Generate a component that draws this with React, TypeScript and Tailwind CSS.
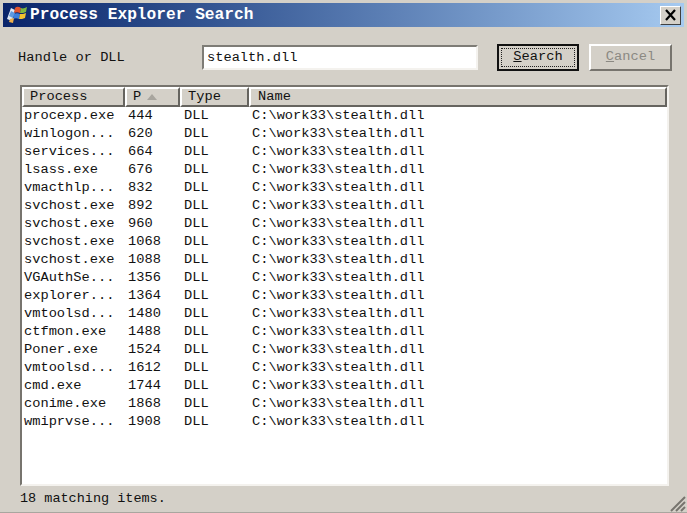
const rows = [
  ["procexp.exe", "444"],
  ["winlogon...", "620"],
  ["services...", "664"],
  ["lsass.exe", "676"],
  ["vmacthlp...", "832"],
  ["svchost.exe", "892"],
  ["svchost.exe", "960"],
  ["svchost.exe", "1068"],
  ["svchost.exe", "1088"],
  ["VGAuthSe...", "1356"],
  ["explorer...", "1364"],
  ["vmtoolsd...", "1480"],
  ["ctfmon.exe", "1488"],
  ["Poner.exe", "1524"],
  ["vmtoolsd...", "1612"],
  ["cmd.exe", "1744"],
  ["conime.exe", "1868"],
  ["wmiprvse...", "1908"],
];

function HeaderCell({ className, children }: { className: string; children: React.ReactNode }) {
  return (
    <div className={`flex h-[20px] items-center border-2 border-t-white border-l-white border-r-[#66645f] border-b-[#66645f] bg-[#d4d0c8] pl-[6px] ${className}`}>
      {children}
    </div>
  );
}

function WinLogo() {
  return (
    <svg width="22" height="20" viewBox="0 0 22 20" className="shrink-0">
      <path d="M1 14 L5 3 L9 5 L6 16 Z" fill="#dfe8f5" />
      <path d="M3 11 L5 6 L9 8 L7 13 Z" fill="#5f9ae0" />
      <path d="M9 3 C11 1 13 2 15 3 L14 8 C12 7 10 7 8 8 Z" fill="#e2552e" />
      <path d="M15 3 C17 4 19 3 21 2 L20 7 C18 8 16 8 14 8 Z" fill="#7fb73f" />
      <path d="M8 9 C10 8 12 8 14 9 L13 14 C11 13 9 13 7 14 Z" fill="#3d7fdc" />
      <path d="M14 9 C16 9 18 9 20 8 L19 13 C17 14 15 14 13 14 Z" fill="#f2c230" />
      <path d="M4 14 L8 13 L7 18 L3 17 Z" fill="#f0b04a" />
    </svg>
  );
}

export default function App() {
  return (
    <div className="flex h-[513px] w-[687px] flex-col overflow-hidden border-b border-b-[#a9a69f] bg-[#d4d0c8] px-[3px] pt-[3px] font-['Liberation_Mono','DejaVu_Sans_Mono',monospace] text-[13.7px] text-[#111]">
      <div className="flex h-[24px] shrink-0 items-center bg-gradient-to-r from-[#0a246a] to-[#a6caf0] pr-[3px] pl-[3px]">
        <WinLogo />
        <span className="ml-[2px] text-[16.2px] font-bold text-white">Process Explorer Search</span>
        <button className="ml-auto flex h-[19px] w-[21px] items-center justify-center border border-t-white border-l-white border-r-[#404040] border-b-[#404040] bg-[#d4d0c8]">
          <svg width="13" height="12" viewBox="0 0 13 12">
            <path d="M2 1 L11 11 M11 1 L2 11" stroke="#000" strokeWidth="2.2" fill="none" />
          </svg>
        </button>
      </div>

      <div className="flex h-[58px] shrink-0 items-center pt-[3px] pl-[15px]">
        <span className="w-[184px] pt-[1px]">Handle or DLL</span>
        <input
          readOnly
          value="stealth.dll"
          className="h-[25px] w-[276px] border-2 border-t-[#7e7c76] border-l-[#7e7c76] border-r-[#f4f2ee] border-b-[#f4f2ee] bg-white pl-[3px] text-[13.7px] outline-none"
        />
        <button className="ml-[19px] flex h-[27px] w-[82px] items-center justify-center border-2 border-[#111] bg-[#d4d0c8] p-[2px]">
          <span className="flex h-full w-full items-center justify-center border border-dotted border-[#222]">
            <span><u>S</u>earch</span>
          </span>
        </button>
        <button className="ml-[10px] flex h-[27px] w-[83px] items-center justify-center border-2 border-t-white border-l-white border-r-[#77746e] border-b-[#77746e] bg-[#d4d0c8] text-[#8b8983]">
          <span><u>C</u>ancel</span>
        </button>
      </div>

      <div className="ml-[17px] h-[401px] w-[649px] shrink-0 border-2 border-t-[#77746e] border-l-[#77746e] border-r-[#f4f2ee] border-b-[#f4f2ee] bg-white">
        <div className="flex">
          <HeaderCell className="w-[103px]">Process</HeaderCell>
          <HeaderCell className="w-[55px]">
            <span>P</span>
            <svg width="10" height="6" viewBox="0 0 10 6" className="ml-[6px]">
              <path d="M5 0 L10 6 L0 6 Z" fill="#a8a59e" />
            </svg>
          </HeaderCell>
          <HeaderCell className="w-[69px]">Type</HeaderCell>
          <HeaderCell className="flex-1 pl-[7px]">Name</HeaderCell>
        </div>
        <div>
          {rows.map(([name, pid], i) => (
            <div key={i} className="flex h-[18px] items-center leading-none">
              <span className="w-[106px] pl-[2px] whitespace-nowrap">{name}</span>
              <span className="w-[56px]">{pid}</span>
              <span className="w-[68px]">DLL</span>
              <span>C:\work33\stealth.dll</span>
            </div>
          ))}
        </div>
      </div>

      <div className="relative flex-1">
        <div className="pt-[3px] pl-[17px] text-[13.5px]">18 matching items.</div>
        <svg width="18" height="18" viewBox="0 0 18 18" className="absolute right-[-2px] bottom-0">
          <path d="M17 3 L3 17 M17 8 L8 17 M17 13 L13 17" stroke="#77746e" strokeWidth="2" fill="none" />
        </svg>
      </div>
    </div>
  );
}
